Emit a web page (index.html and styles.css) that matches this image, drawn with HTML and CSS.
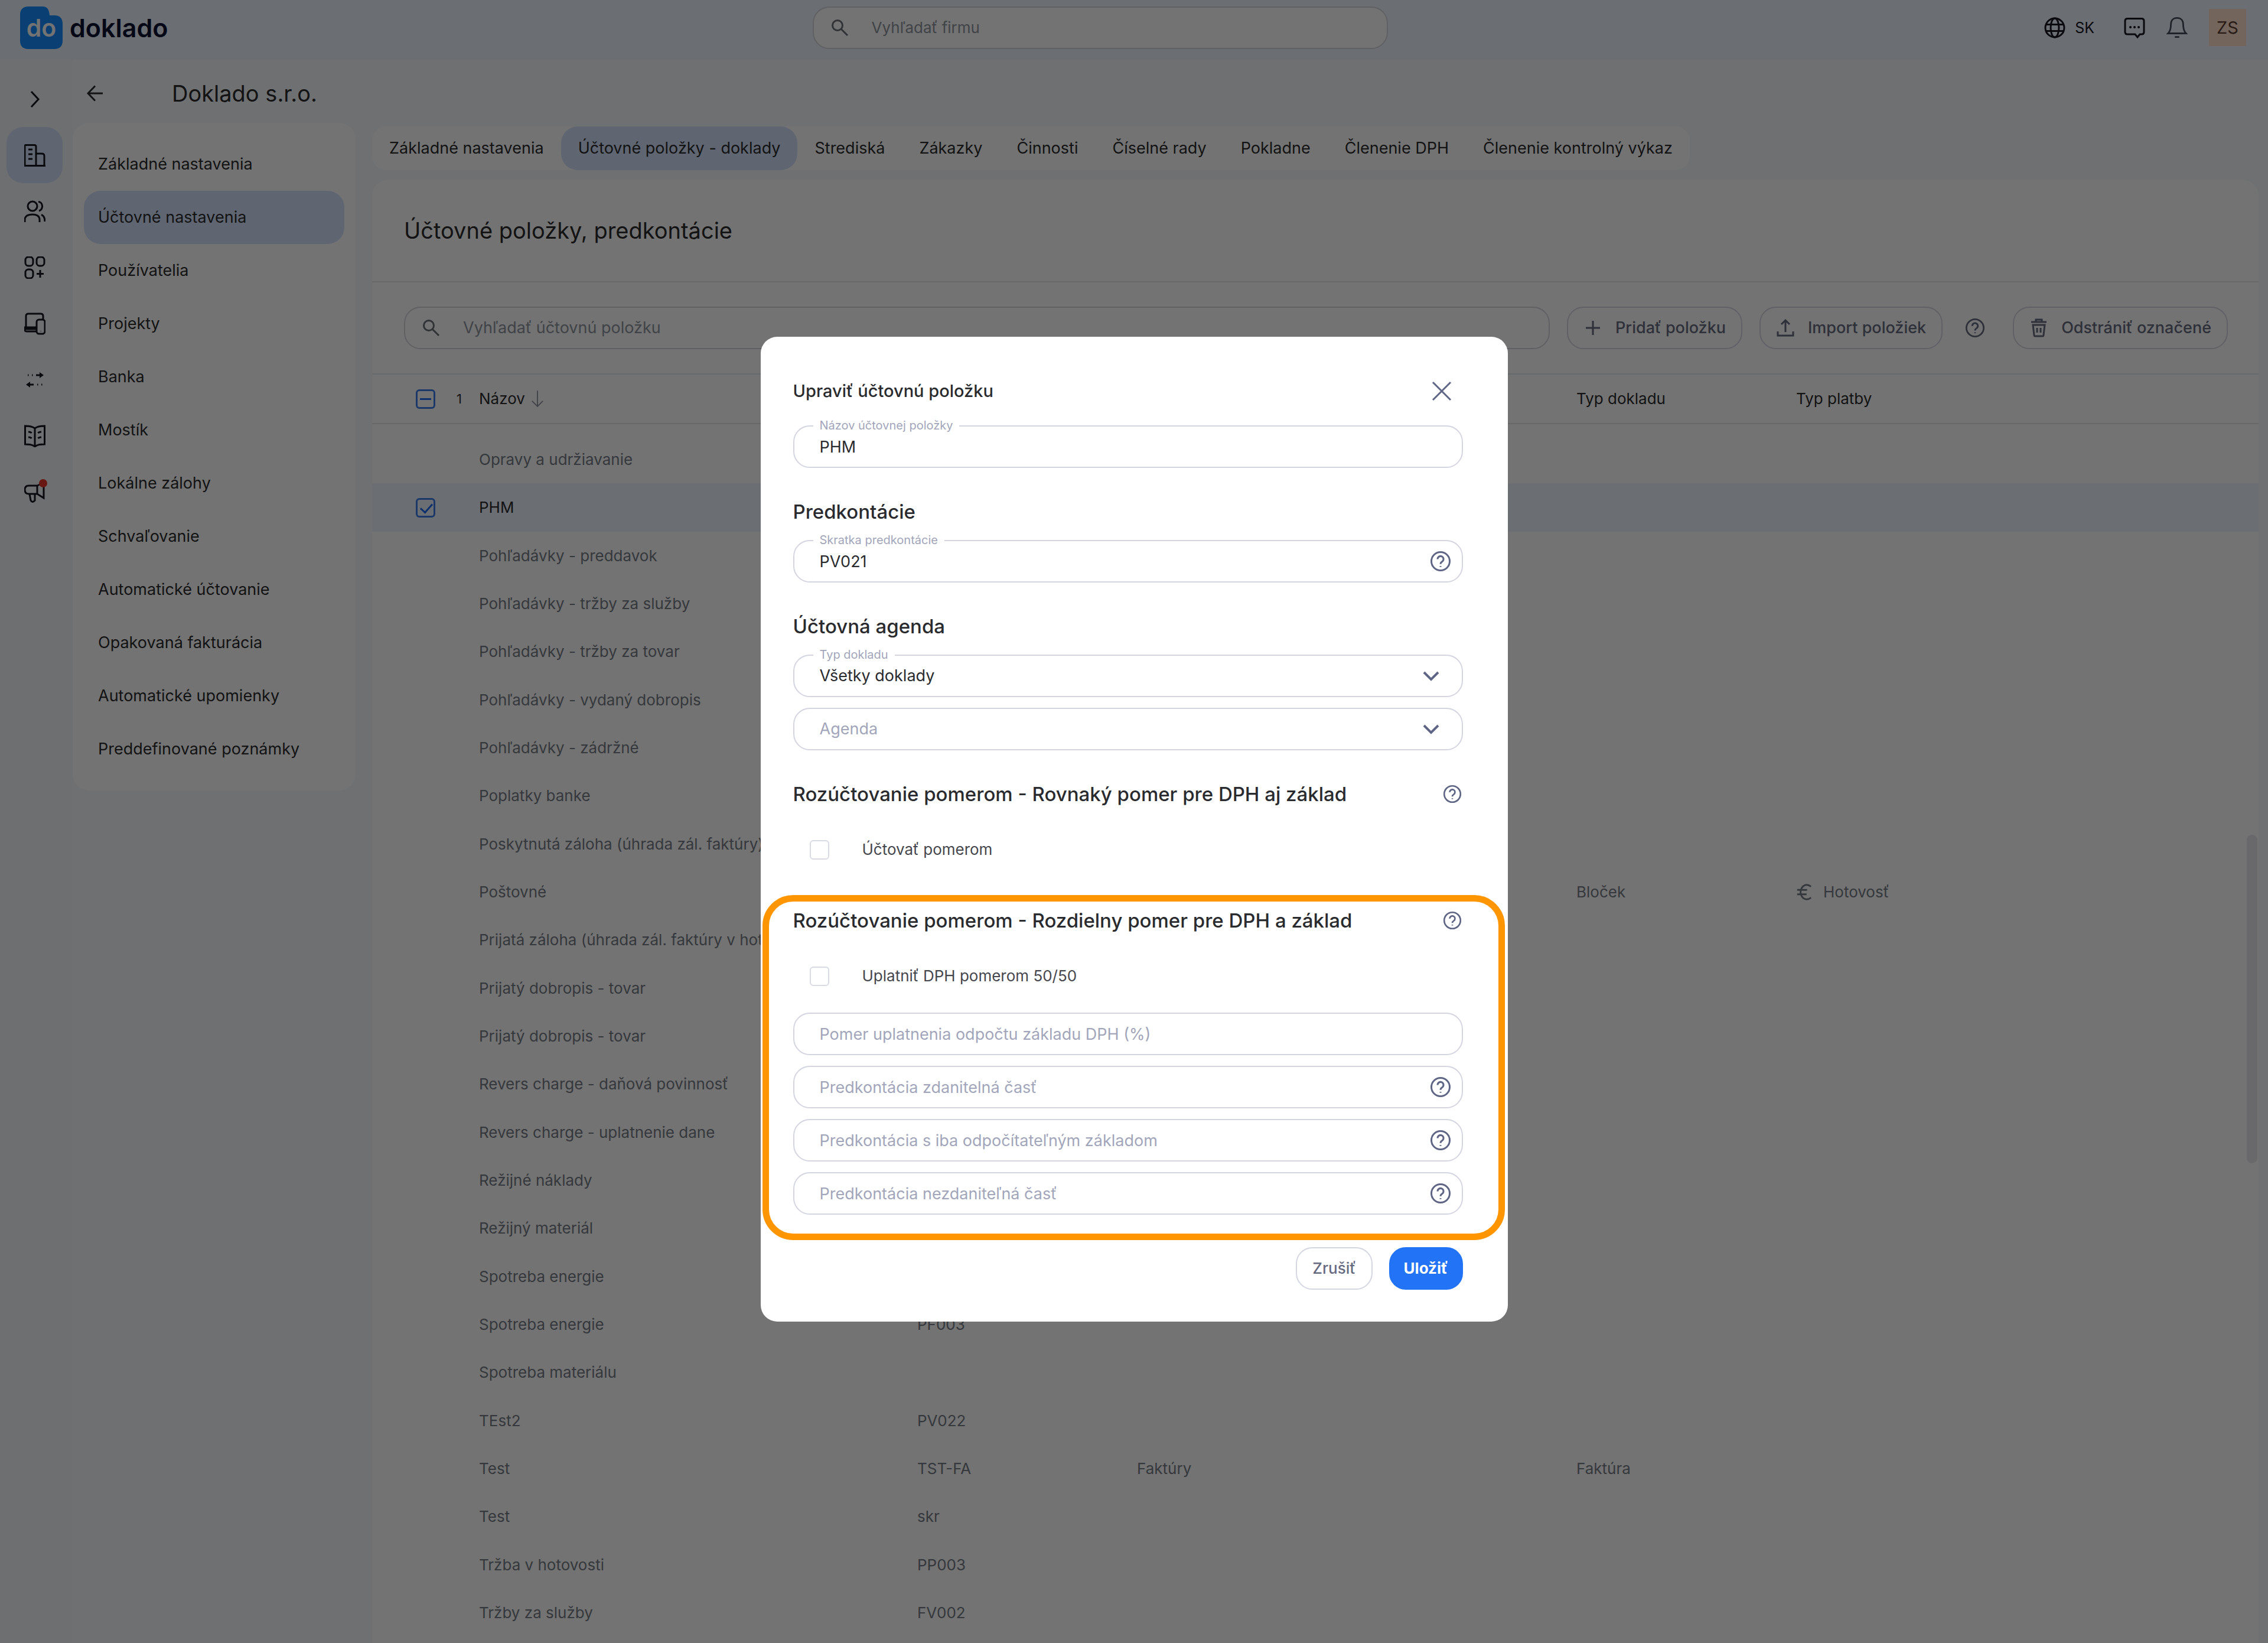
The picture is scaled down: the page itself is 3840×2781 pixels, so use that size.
FILE: index.html
```html
<!DOCTYPE html>
<html lang="sk">

  <head>

    <meta charset="utf-8">
    <title>Doklado - Účtovné položky, predkontácie</title>

    <link rel="stylesheet" href="styles.css">

  </head>

  <body>

    <!-- shared icons -->
    <svg class="sprite" aria-hidden="true">
      <symbol id="i-search" viewBox="0 0 32 32"><circle cx="12" cy="12" r="8.5"/><path d="M18.5 18.5 L29 29"/></symbol>
      <symbol id="i-help" viewBox="0 0 36 36"><circle cx="18" cy="18" r="15.5"/><path d="M13 14.5 a5 5 0 1 1 7.6 4.2 c-1.8 1.1 -2.6 2 -2.6 4"/><path d="M18 26 v1.6"/></symbol>
      <symbol id="i-down" viewBox="0 0 32 32"><path d="M4 10 L16 22 L28 10"/></symbol>
    </svg>

    <header class="topbar">
      <a class="logo" href="#">
        <svg viewBox="0 0 72 72"><path d="M14 0 H38 C46 0 49 5 50 15 H58 C68 15 72 21 72 29 V58 C72 67 67 72 58 72 H14 C5 72 0 67 0 58 V14 C0 5 5 0 14 0 Z" fill="#148cff"/><text x="36" y="51" text-anchor="middle">do</text></svg>
        <span>doklado</span>
      </a>
      <label class="search topsearch"><svg><use href="#i-search"/></svg><input type="text" placeholder="Vyhľadať firmu" aria-label="Vyhľadať firmu"></label>
      <div class="topright">
        <button class="lang"><svg viewBox="0 0 36 36"><circle cx="18" cy="18" r="16"/><ellipse cx="18" cy="18" rx="7" ry="16"/><path d="M3 12.5 H33 M3 23.5 H33"/></svg>SK</button>
        <button class="chat" aria-label="Správy"><svg viewBox="0 0 36 36"><path d="M6 2.5 H30 Q34 2.5 34 6.5 V25 Q34 29 30 29 H27 L23 34 L19 29 H6 Q2 29 2 25 V6.5 Q2 2.5 6 2.5 Z"/><path class="dots" d="M11 17 h.1 M18 17 h.1 M25 17 h.1"/></svg></button>
        <button class="bell" aria-label="Upozornenia"><svg viewBox="0 0 36 38"><path d="M2 29 H34 C30 25 29 21 29 13 C29 5 24 1.5 18 1.5 C12 1.5 7 5 7 13 C7 21 6 25 2 29 Z M14 35.5 H22"/></svg></button>
        <span class="avatar">ZS</span>
      </div>
    </header>

    <div class="page">

      <nav class="rail">
        <button class="expand" aria-label="Rozbaliť"><svg viewBox="0 0 36 36"><path d="M12 5 L24 18 L12 31"/></svg></button>
        <a class="active" href="#" aria-label="Firma"><svg viewBox="0 0 36 38"><path d="M1 36.5 V3 Q1 1.5 3 1.5 H17 Q20 1.5 20 4 V36.5 M20 16 H30 Q34 16 34 20 V36.5 M0 36.5 H36 M7 9 H14 M7 17 H14 M7 25 H14"/></svg></a>
        <a href="#" aria-label="Používatelia"><svg viewBox="0 0 36 38"><circle cx="14" cy="10" r="8"/><path d="M1 37 V33 C1 26 6 24 14 24 C21 24 26 26 26 33 V37 M24 2.5 C32 3 33 15 25 18 M29 24.5 C33 26 35 30 35 36"/></svg></a>
        <a href="#" aria-label="Moduly"><svg viewBox="0 0 36 38"><rect x="2" y="1" width="13" height="15" rx="5"/><rect x="21" y="1" width="13" height="15" rx="5"/><rect x="2" y="22" width="13" height="15" rx="5"/><path d="M27 23 V36 M21 29.500 H33"/></svg></a>
        <a href="#" aria-label="Zariadenia"><svg viewBox="0 0 36 38"><path d="M3 25 V6 Q3 2 7 2 H28 Q32 2 32 6 V11 M20 25 H1 V29 Q1 32 4 32 H20 M2 28 H20"/><rect x="21" y="12" width="14" height="24" rx="4"/><path d="M28 31 v.5"/></svg></a>
        <a href="#" aria-label="Banka"><svg viewBox="0 0 36 38"><path d="M6 11 h1.500 M13 11 h1.500 M20 11 H30 M6 27 H16 M22 27 h1.500 M29 27 h1.500"/><path class="solid" d="M26 6 L33 11 L26 16 Z M10 22 L3 27 L10 32 Z"/></svg></a>
        <a href="#" aria-label="Denník"><svg viewBox="0 0 36 38"><path d="M18 6 C13 2 7 2 1.500 2 V33 C8 33 13 33 18 37 C23 33 28 33 34.500 33 V2 C29 2 23 2 18 6 Z V36 M7 12 C9 12 11 12 12.500 14 M7 21 C9 21 11 21 12.500 23 M29 12 C27 12 25 12 23.500 14 M29 21 C27 21 25 21 23.500 23"/></svg></a>
        <a href="#" aria-label="Novinky"><svg viewBox="0 0 36 38"><path d="M22 8 H8 Q1 8 1 15 Q1 22 8 22 H22 Z M22 8 L33 3 V29 L22 22 M9 22 L11 33 Q14 38 18 33 V22"/></svg><i class="dot"></i></a>
      </nav>

      <div class="sidecol">
        <div class="firm">
          <a href="#" aria-label="Späť"><svg viewBox="0 0 28 28"><path d="M27 14 H2 M14 1.500 L2 14 L14 26.500"/></svg></a>
          <h1>Doklado s.r.o.</h1>
        </div>
        <nav class="sidemenu">
          <a href="#">Základné nastavenia</a>
          <a class="active" href="#">Účtovné nastavenia</a>
          <a href="#">Používatelia</a>
          <a href="#">Projekty</a>
          <a href="#">Banka</a>
          <a href="#">Mostík</a>
          <a href="#">Lokálne zálohy</a>
          <a href="#">Schvaľovanie</a>
          <a href="#">Automatické účtovanie</a>
          <a href="#">Opakovaná fakturácia</a>
          <a href="#">Automatické upomienky</a>
          <a href="#">Preddefinované poznámky</a>
        </nav>
      </div>

      <main>

        <nav class="tabs">
          <a href="#">Základné nastavenia</a>
          <a class="active" href="#">Účtovné položky - doklady</a>
          <a href="#">Strediská</a>
          <a href="#">Zákazky</a>
          <a href="#">Činnosti</a>
          <a href="#">Číselné rady</a>
          <a href="#">Pokladne</a>
          <a href="#">Členenie DPH</a>
          <a href="#">Členenie kontrolný výkaz</a>
        </nav>

        <section class="card">

          <h2>Účtovné položky, predkontácie</h2>

          <div class="toolbar">
            <label class="search"><svg><use href="#i-search"/></svg><input type="text" placeholder="Vyhľadať účtovnú položku" aria-label="Vyhľadať účtovnú položku"></label>
            <button class="btn"><svg viewBox="0 0 32 32"><path d="M16 4 V28 M4 16 H28"/></svg>Pridať položku</button>
            <button class="btn"><svg viewBox="0 0 32 32"><path d="M16 23 V4 M9 10 L16 3 L23 10 M3 22 V29 H29 V22"/></svg>Import položiek</button>
            <button class="helpbtn" aria-label="Pomoc"><svg><use href="#i-help"/></svg></button>
            <button class="btn"><svg viewBox="0 0 32 32"><path d="M3 6 H29 M11 5 V2 H21 V5 M6 11 L8 28 Q8 30 10 30 H22 Q24 30 24 28 L26 11 Z M13 16 V24 M19 16 V24"/></svg>Odstrániť označené</button>
          </div>

          <table>
            <colgroup><col class="c-check"><col class="c-name"><col class="c-mid"><col class="c-mid"><col class="c-mid"><col class="c-mid"><col></colgroup>
            <thead>
              <tr>
                <th><div class="pick"><input type="checkbox" class="some" aria-label="Označiť všetky"><span>1</span></div></th>
                <th><div class="sort">Názov <svg viewBox="0 0 24 32"><path d="M12 1 V30 M2 20 L12 30 L22 20"/></svg></div></th>
                <th></th><th></th><th></th><th>Typ dokladu</th><th>Typ platby</th>
              </tr>
            </thead>
            <tbody>
              <tr class="spacer"><td colspan="7"></td></tr>
              <tr><td></td><td>Opravy a udržiavanie</td><td></td><td></td><td></td><td></td><td></td></tr>
              <tr class="selected"><td><div class="pick"><input type="checkbox" checked aria-label="PHM"></div></td><td>PHM</td><td></td><td></td><td></td><td></td><td></td></tr>
              <tr><td></td><td>Pohľadávky - preddavok</td><td></td><td></td><td></td><td></td><td></td></tr>
              <tr><td></td><td>Pohľadávky - tržby za služby</td><td></td><td></td><td></td><td></td><td></td></tr>
              <tr><td></td><td>Pohľadávky - tržby za tovar</td><td></td><td></td><td></td><td></td><td></td></tr>
              <tr><td></td><td>Pohľadávky - vydaný dobropis</td><td></td><td></td><td></td><td></td><td></td></tr>
              <tr><td></td><td>Pohľadávky - zádržné</td><td></td><td></td><td></td><td></td><td></td></tr>
              <tr><td></td><td>Poplatky banke</td><td></td><td></td><td></td><td></td><td></td></tr>
              <tr><td></td><td>Poskytnutá záloha (úhrada zál. faktúry)</td><td></td><td></td><td></td><td></td><td></td></tr>
              <tr><td></td><td>Poštovné</td><td></td><td></td><td></td><td>Bloček</td><td><div class="pay"><svg viewBox="0 0 28 32"><path d="M26 6 C17 -1 8 5 7 16 C8 27 17 33 26 26 M1 12 H19 M1 20 H18"/></svg>Hotovosť</div></td></tr>
              <tr><td></td><td>Prijatá záloha (úhrada zál. faktúry v hotovosti)</td><td></td><td></td><td></td><td></td><td></td></tr>
              <tr><td></td><td>Prijatý dobropis - tovar</td><td></td><td></td><td></td><td></td><td></td></tr>
              <tr><td></td><td>Prijatý dobropis - tovar</td><td></td><td></td><td></td><td></td><td></td></tr>
              <tr><td></td><td>Revers charge - daňová povinnosť</td><td></td><td></td><td></td><td></td><td></td></tr>
              <tr><td></td><td>Revers charge - uplatnenie dane</td><td></td><td></td><td></td><td></td><td></td></tr>
              <tr><td></td><td>Režijné náklady</td><td></td><td></td><td></td><td></td><td></td></tr>
              <tr><td></td><td>Režijný materiál</td><td></td><td></td><td></td><td></td><td></td></tr>
              <tr><td></td><td>Spotreba energie</td><td></td><td></td><td></td><td></td><td></td></tr>
              <tr><td></td><td>Spotreba energie</td><td>PF003</td><td></td><td></td><td></td><td></td></tr>
              <tr><td></td><td>Spotreba materiálu</td><td></td><td></td><td></td><td></td><td></td></tr>
              <tr><td></td><td>TEst2</td><td>PV022</td><td></td><td></td><td></td><td></td></tr>
              <tr><td></td><td>Test</td><td>TST-FA</td><td>Faktúry</td><td></td><td>Faktúra</td><td></td></tr>
              <tr><td></td><td>Test</td><td>skr</td><td></td><td></td><td></td><td></td></tr>
              <tr><td></td><td>Tržba v hotovosti</td><td>PP003</td><td></td><td></td><td></td><td></td></tr>
              <tr><td></td><td>Tržby za služby</td><td>FV002</td><td></td><td></td><td></td><td></td></tr>
            </tbody>
          </table>

          <div class="scrollthumb"></div>

        </section>

      </main>

    </div>

    <div class="overlay">
      <form class="modal" role="dialog" aria-labelledby="modaltitle">

        <div class="modalhead">
          <h2 id="modaltitle">Upraviť účtovnú položku</h2>
          <button type="button" class="close" aria-label="Zavrieť"><svg viewBox="0 0 36 36"><path d="M3 3 L33 33 M33 3 L3 33"/></svg></button>
        </div>

        <div class="field">
          <input type="text" id="nazov" value="PHM">
          <label for="nazov">Názov účtovnej položky</label>
        </div>

        <h3>Predkontácie</h3>
        <div class="field">
          <input type="text" id="skratka" value="PV021">
          <label for="skratka">Skratka predkontácie</label>
          <svg><use href="#i-help"/></svg>
        </div>

        <h3>Účtovná agenda</h3>
        <div class="stack">
          <div class="field">
            <select id="typ"><option>Všetky doklady</option></select>
            <label for="typ">Typ dokladu</label>
            <svg class="arrow"><use href="#i-down"/></svg>
          </div>
          <div class="field">
            <select class="empty" aria-label="Agenda"><option>Agenda</option></select>
            <svg class="arrow"><use href="#i-down"/></svg>
          </div>
        </div>

        <h3>Rozúčtovanie pomerom - Rovnaký pomer pre DPH aj základ <svg><use href="#i-help"/></svg></h3>
        <label class="check"><input type="checkbox">Účtovať pomerom</label>

        <div class="highlight">
          <h3>Rozúčtovanie pomerom - Rozdielny pomer pre DPH a základ <svg><use href="#i-help"/></svg></h3>
          <label class="check"><input type="checkbox">Uplatniť DPH pomerom 50/50</label>
          <div class="stack">
            <div class="field"><input type="text" placeholder="Pomer uplatnenia odpočtu základu DPH (%)" aria-label="Pomer uplatnenia odpočtu základu DPH (%)"></div>
            <div class="field"><input type="text" placeholder="Predkontácia zdanitelná časť" aria-label="Predkontácia zdanitelná časť"><svg><use href="#i-help"/></svg></div>
            <div class="field"><input type="text" placeholder="Predkontácia s iba odpočítateľným základom" aria-label="Predkontácia s iba odpočítateľným základom"><svg><use href="#i-help"/></svg></div>
            <div class="field"><input type="text" placeholder="Predkontácia nezdaniteľná časť" aria-label="Predkontácia nezdaniteľná časť"><svg><use href="#i-help"/></svg></div>
          </div>
        </div>

        <div class="actions">
          <button type="button" class="btn">Zrušiť</button>
          <button type="submit" class="btn primary">Uložiť</button>
        </div>

      </form>
    </div>

  </body>

</html>
```

FILE: styles.css
```css
*                       { box-sizing: border-box; }

body                    { margin: 0; font: 26px/32px Inter, "Open Sans", sans-serif; color: #2a2b2e; background-color: #f6f9fc; }

h1, h2, h3              { margin: 0; font-weight: 400; }
a                       { color: inherit; text-decoration: none; }
button, input, select   { font: inherit; color: inherit; margin: 0; }
button                  { background: none; border: 0; padding: 0; cursor: pointer; }
svg                     { display: block; flex: none; width: 36px; height: 36px; fill: none; stroke: currentColor; stroke-width: 3; }
.sprite                 { display: none; }

/* top bar */

.topbar                 { display: grid; grid-template-columns: 12fr minmax(0, 974px) 13fr; align-items: center; height: 101px; padding: 0 37px 8px 34px; background-color: #edf3ff; }
.logo, .topright        { display: flex; align-items: center; }
.logo                   { gap: 12px; font-size: 43px; font-weight: 600; color: #0b1030; }
.logo svg               { width: 72px; height: 72px; stroke: none; }
.logo text              { fill: #fff; font-size: 41px; font-weight: 600; }
.topright               { justify-content: flex-end; gap: 36px; color: #14161f; }
.topright .lang         { display: flex; align-items: center; gap: 16px; font-size: 25px; margin-right: 14px; }
.topright .bell         { color: #4b4f5e; }
.topright .dots         { stroke-width: 4; stroke-linecap: round; }
.avatar                 { width: 63px; height: 63px; line-height: 63px; text-align: center; font-size: 29px; color: #5d4034; background-color: #ffdfca; }

.search                 { display: flex; align-items: center; gap: 38px; height: 72px; padding: 0 28px; border: 2px solid #d4d6dc; border-radius: 28px; background-color: #fff; color: #6b7079; }
.search svg             { width: 32px; height: 32px; }
.search input           { flex: 1; min-width: 0; border: 0; outline: 0; padding: 0; background: none; }
.search input::placeholder { color: #8e949e; opacity: 1; }

/* page columns */

.page                   { display: flex; min-height: calc(100vh - 101px); padding-right: 16px; }

.rail                   { flex: 0 0 123px; display: flex; flex-direction: column; padding: 19px 17px 0 11px; color: #14161f; background-color: #f1f5fb; }
.rail a, .rail .expand  { position: relative; display: flex; align-items: center; justify-content: center; height: 95px; border-radius: 28px; }
.rail .active           { background-color: #d3e2fb; }
.rail svg               { height: 38px; }
.rail .solid            { fill: currentColor; stroke: none; }
.rail .dot              { position: absolute; top: 26px; right: 26px; width: 14px; height: 14px; border-radius: 50%; background-color: #e8342a; }

.sidecol                { flex: 0 0 479px; margin-right: 28px; }
.firm                   { display: flex; align-items: center; gap: 116px; height: 107px; padding: 6px 0 0 24px; }
.firm svg               { width: 28px; height: 28px; }
.firm h1                { font-size: 38px; line-height: 44px; }
.sidemenu               { padding: 25px 19px; border-radius: 28px; font-size: 27px; background-color: #fff; }
.sidemenu a             { display: block; padding: 29px 24px; border-radius: 28px; }
.sidemenu .active       { background-color: #d3e2fb; }

main                    { flex: 1; min-width: 0; padding-top: 113px; display: flex; flex-direction: column; }
.tabs                   { display: flex; align-self: flex-start; margin-bottom: 16px; border-radius: 24px; font-size: 27px; background-color: #fff; }
.tabs a                 { padding: 21px 29px; border-radius: 28px; }
.tabs .active           { background-color: #d3e2fb; }

/* items card */

.card                   { position: relative; flex: 1; border-radius: 28px 28px 0 0; background-color: #fff; }
.card h2                { padding: 64px 54px; font-size: 38px; line-height: 44px; border-bottom: 2px solid #e4e6ea; }
.toolbar                { display: flex; align-items: center; padding: 41px 52px 41px 54px; font-size: 27px; border-bottom: 2px solid #e4e6ea; }
.toolbar .search        { flex: 1; }
.toolbar .btn           { margin-left: 29px; }
.btn                    { display: flex; align-items: center; gap: 22px; height: 72px; padding: 0 26px; border: 2px solid #d4d6e2; border-radius: 28px; color: #666b80; font-weight: 500; }
.btn svg                { width: 32px; height: 32px; }
.toolbar .helpbtn       { margin: 0 18px 0 38px; color: #666b80; }
.toolbar .helpbtn svg   { width: 34px; height: 34px; }

table                   { width: 100%; table-layout: fixed; border-collapse: collapse; color: #767c86; }
.c-check                { width: 181px; }
.c-name                 { width: 742px; }
.c-mid                  { width: 372px; }
th, td                  { padding: 0; text-align: left; font-weight: 400; white-space: nowrap; }
th                      { height: 83px; color: #2a2b2e; }
thead                   { border-bottom: 2px solid #e4e6ea; }
tr                      { height: 81px; }
tbody tr:nth-child(3n)  { height: 82px; }
tbody .spacer           { height: 20px; }
.selected               { color: #2a2b2e; background-color: #edf3ff; }
.pick                   { display: flex; align-items: center; gap: 36px; padding-left: 74px; }
.pick span              { font-size: 22px; }
.sort                   { display: flex; align-items: center; gap: 10px; }
.sort svg               { width: 22px; height: 32px; color: #8e949e; stroke-width: 2; }
.pay                    { display: flex; align-items: center; gap: 18px; }
.pay svg                { width: 28px; height: 30px; }

input[type=checkbox]    { appearance: none; position: relative; flex: none; width: 33px; height: 33px; border: 2px solid #d8dae4; border-radius: 6px; }
.pick input[type=checkbox] { border: 3px solid #3d7de6; }
.pick .some::after      { content: ""; position: absolute; left: 4px; top: 12px; width: 19px; height: 3px; background-color: #1f6bf0; }
.pick :checked::after   { content: ""; position: absolute; left: 9px; top: 2px; width: 9px; height: 17px; border: solid #1f6bf0; border-width: 0 3px 3px 0; transform: rotate(42deg); }

.scrollthumb            { position: absolute; top: 1109px; right: 2px; width: 18px; height: 556px; border-radius: 9px; background-color: #e8e8ee; }

/* edit dialog */

.overlay                { position: fixed; inset: 0; display: flex; align-items: center; justify-content: center; padding-top: 26px; background-color: rgba(0, 0, 0, .55); }
.modal                  { width: 1265px; max-width: 96vw; padding: 56px 76px 54px 55px; border-radius: 28px; background-color: #fff; }
.modalhead              { display: flex; align-items: center; justify-content: space-between; height: 72px; margin-bottom: 22px; padding-right: 18px; }
.modalhead h2           { font-size: 29px; font-weight: 500; }
.close, .field svg, h3 svg { color: #5e6585; }

.modal h3               { display: flex; align-items: center; justify-content: space-between; margin: 54px 0 28px; padding-right: 2px; font-size: 33px; line-height: 40px; font-weight: 500; }
h3 svg                  { width: 32px; height: 32px; }

.stack                  { display: grid; gap: 18px; }
.field                  { position: relative; }
.field input,
.field select           { display: block; width: 100%; height: 72px; padding: 0 90px 0 43px; border: 2px solid #d4d5e0; border-radius: 28px; outline: 0; appearance: none; font-size: 27px; background-color: #fff; }
.field input::placeholder { color: #a2a6ba; opacity: 1; }
.field .empty           { color: #a2a6ba; }
.field label            { position: absolute; left: 34px; top: -12px; padding: 0 11px; font-size: 20px; line-height: 24px; color: #a2a6ba; background-color: #fff; }
.field svg              { position: absolute; right: 20px; top: 18px; }
.field .arrow           { right: 38px; top: 20px; width: 32px; height: 32px; stroke-width: 4; }

.check                  { display: flex; align-items: center; gap: 56px; height: 92px; padding-left: 28px; color: #45474d; }

.highlight              { position: relative; margin: 54px 0 55px; }
.modal .highlight h3    { margin-top: 0; }
.highlight .stack       { margin-top: 16px; }
.highlight::after       { content: ""; position: absolute; inset: -23px -71px -43px -52px; border: 11px solid #ff9500; border-radius: 52px; pointer-events: none; }

.actions                { display: flex; justify-content: flex-end; gap: 28px; }
.primary                { padding: 0 23px; border-color: #2273f5; background-color: #2273f5; color: #fff; font-weight: 700; }
```
